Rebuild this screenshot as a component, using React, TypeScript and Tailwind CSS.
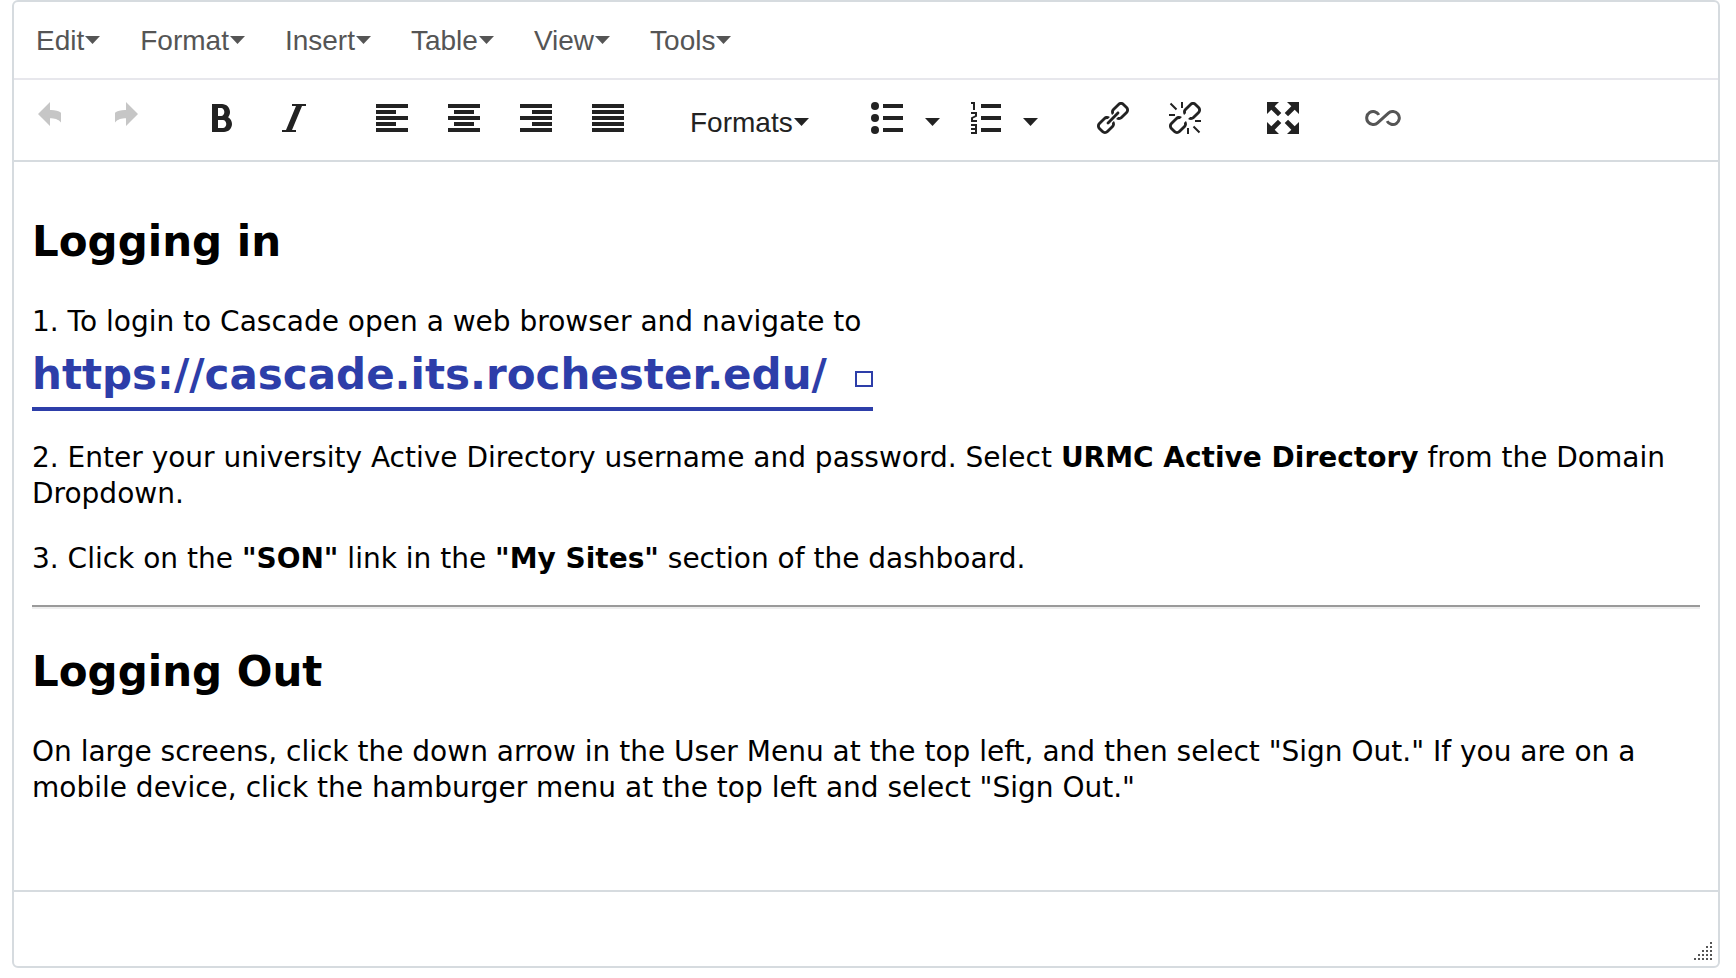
import type { ReactNode } from "react";
import {
  ImBold,
  ImItalic,
  ImListNumbered,
  ImParagraphCenter,
  ImParagraphJustify,
  ImParagraphLeft,
  ImParagraphRight,
} from "react-icons/im";

const menus = ["Edit", "Format", "Insert", "Table", "View", "Tools"];

const linkHalves =
  "M476.888 675.112c4.56 9.048 6.99 19.158 6.99 29.696 0 17.616-6.744 34.058-18.992 46.308l-163.38 163.38c-12.248 12.248-28.696 18.992-46.308 18.992s-34.06-6.744-46.308-18.992l-99.38-99.38c-12.248-12.25-18.992-28.696-18.992-46.308s6.744-34.060 18.992-46.308l163.382-163.382c12.248-12.246 28.696-18.992 46.308-18.992 10.538 0 20.644 2.43 29.696 6.988l65.338-65.336c-27.87-21.41-61.44-32.16-95.034-32.16-39.986 0-79.972 15.166-110.308 45.502l-163.38 163.382c-60.67 60.67-60.67 159.95 0 220.618l99.382 99.382c30.334 30.332 70.32 45.5 110.306 45.5 39.988 0 79.974-15.168 110.308-45.502l163.38-163.38c55.82-55.82 60.238-144.298 13.344-205.346l-65.34 65.338zM978.496 144.884l-99.38-99.382c-30.334-30.336-70.32-45.502-110.308-45.502-39.986 0-79.97 15.166-110.306 45.502l-163.382 163.382c-55.82 55.82-60.238 144.298-13.342 205.342l65.338-65.34c-4.558-9.050-6.988-19.16-6.988-29.694 0-17.616 6.744-34.060 18.992-46.308l163.382-163.382c12.246-12.248 28.694-18.994 46.306-18.994s34.060 6.746 46.308 18.994l99.38 99.382c12.248 12.248 18.992 28.694 18.992 46.308s-6.744 34.060-18.992 46.308l-163.38 163.382c-12.248 12.248-28.694 18.992-46.308 18.992-10.536 0-20.644-2.43-29.696-6.990l-65.338 65.338c27.872 21.41 61.44 32.16 95.034 32.16 39.988 0 79.974-15.168 110.308-45.504l163.38-163.380c60.672-60.666 60.672-159.944 0.002-220.612z";

function Caret() {
  return (
    <svg viewBox="0 0 15 8" className="mb-0.5 h-2 w-[15px] shrink-0" fill="currentColor" aria-hidden="true">
      <path d="M0 0h15L7.500 8z" />
    </svg>
  );
}

function UndoIcon() {
  return (
    <svg viewBox="0 0 32 32" className="size-8" fill="currentColor">
      <path d="M2 12 14 0v8c4.500-.2 8.500.8 11 2.800v9.700c-3-3.400-6.500-4.200-11-4.200V24z" />
    </svg>
  );
}

function BulletListIcon() {
  return (
    <svg viewBox="0 0 32 32" className="size-8" fill="currentColor">
      <circle cx="4" cy="4" r="4" />
      <circle cx="4" cy="16" r="4" />
      <circle cx="4" cy="28" r="4" />
      <path d="M12 2h20v4H12zM12 14h20v4H12zM12 26h20v4H12z" />
    </svg>
  );
}

function LinkIcon() {
  return (
    <svg viewBox="0 0 1024 1024" className="size-8" fill="currentColor">
      <path d="M320 704c17.600 17.600 47.274 16.726 65.942-1.942l316.118-316.116c18.668-18.668 19.540-48.342 1.940-65.942s-47.274-16.726-65.942 1.942l-316.116 316.116c-18.668 18.668-19.542 48.342-1.942 65.942z" />
      <path d={linkHalves} />
    </svg>
  );
}

function UnlinkIcon() {
  return (
    <svg viewBox="0 0 1024 1024" className="size-8" fill="currentColor">
      <path d={linkHalves} />
      <path
        d="M48 48 240 240M416 0v192M0 416h192M784 784l192 192M608 832v192M832 608h192"
        stroke="currentColor"
        strokeWidth="64"
      />
    </svg>
  );
}

function FullscreenIcon() {
  return (
    <svg viewBox="0 0 1024 1024" className="size-8" fill="currentColor">
      <path d="M1024 0v384l-138.260-138.260-212 212-107.480-107.480 212-212-138.260-138.260zM245.740 138.260l212 212-107.480 107.480-212-212-138.260 138.260v-384h384zM885.740 778.260l138.260-138.260v384h-384l138.260-138.260-212-212 107.480-107.480zM457.740 673.740l-212 212 138.260 138.260h-384v-384l138.260 138.260 212-212z" />
    </svg>
  );
}

function InfinityIcon() {
  return (
    <svg viewBox="0 0 36 16" className="h-4 w-9" fill="none" stroke="currentColor" strokeWidth="3">
      <path d="M13.900 4.900A6.500 6.500 0 1 0 12.600 12.800L23.400 3.200A6.500 6.500 0 1 1 22.100 11.100" />
    </svg>
  );
}

function ToolButton({ label, disabled, children }: { label: string; disabled?: boolean; children: ReactNode }) {
  return (
    <button
      type="button"
      title={label}
      aria-label={label}
      disabled={disabled}
      className="flex h-18 items-center px-5 disabled:text-[#c6c6c6]"
    >
      {children}
    </button>
  );
}

function SplitButton({ label, children }: { label: string; children: ReactNode }) {
  return (
    <div className="flex w-[98px]">
      <button type="button" aria-label={label} className="flex h-18 items-center pl-5">
        {children}
      </button>
      <button type="button" aria-label={`${label} options`} className="flex h-18 items-center pl-[22px] pt-2.5">
        <Caret />
      </button>
    </div>
  );
}

export default function App() {
  return (
    <div className="bg-white pl-3 pr-4 pb-2.5">
      <div className="rounded-md border-2 border-[#d6dbdf]">
        {/* Menu bar */}
        <nav className="flex h-[78px] items-center gap-10 border-b-2 border-[#e7e7ec] px-[22px] pt-0.5 font-['Liberation_Sans',Arial,sans-serif] text-[28px] leading-8 text-[#555]">
          {menus.map((menu) => (
            <button key={menu} type="button" className="flex items-center gap-px">
              {menu}
              <Caret />
            </button>
          ))}
        </nav>

        {/* Toolbar */}
        <div
          role="toolbar"
          aria-label="Formatting"
          className="flex h-[82px] items-center gap-[26px] border-b-2 border-[#d6dbdf] pb-1 pl-0.5 text-[#222]"
        >
          <div className="flex">
            <ToolButton label="Undo" disabled>
              <UndoIcon />
            </ToolButton>
            <ToolButton label="Redo" disabled>
              <span className="-scale-x-100">
                <UndoIcon />
              </span>
            </ToolButton>
          </div>
          <div className="flex">
            <ToolButton label="Bold">
              <ImBold size={32} />
            </ToolButton>
            <ToolButton label="Italic">
              <ImItalic size={32} />
            </ToolButton>
          </div>
          <div className="flex">
            <ToolButton label="Align left">
              <ImParagraphLeft size={32} />
            </ToolButton>
            <ToolButton label="Align center">
              <ImParagraphCenter size={32} />
            </ToolButton>
            <ToolButton label="Align right">
              <ImParagraphRight size={32} />
            </ToolButton>
            <ToolButton label="Justify">
              <ImParagraphJustify size={32} />
            </ToolButton>
          </div>
          <button
            type="button"
            className="flex h-18 w-[155px] items-center gap-px pl-5 pt-2.5 font-['Liberation_Sans',Arial,sans-serif] text-[28px] leading-8"
          >
            Formats
            <Caret />
          </button>
          <div className="flex pr-1">
            <SplitButton label="Bullet list">
              <BulletListIcon />
            </SplitButton>
            <SplitButton label="Numbered list">
              <ImListNumbered size={32} />
            </SplitButton>
          </div>
          <div className="flex">
            <ToolButton label="Insert link">
              <LinkIcon />
            </ToolButton>
            <ToolButton label="Remove link">
              <UnlinkIcon />
            </ToolButton>
          </div>
          <ToolButton label="Fullscreen">
            <FullscreenIcon />
          </ToolButton>
          <div className="flex text-[#555]">
            <ToolButton label="Insert block">
              <InfinityIcon />
            </ToolButton>
          </div>
        </div>

        {/* Document */}
        <main className="min-h-[728px] px-[18px] pt-[53px] pb-20 font-[Verdana,'DejaVu_Sans',sans-serif] text-[28px] leading-9 text-black">
          <h2 className="mb-[35px] text-[42px] leading-[54px] font-bold">Logging in</h2>
          <p className="mb-[29px]">
            1. To login to Cascade open a web browser and navigate to
            <br />
            <a
              href="https://cascade.its.rochester.edu/"
              className="inline-flex items-center gap-7 border-b-4 border-[#2d3ea9] pt-2 pb-[5px] align-top text-[42px] leading-[54px] font-bold text-[#2d3ea9]"
            >
              https://cascade.its.rochester.edu/
              <span className="mt-2 h-4 w-[18px] border-2 border-[#2d3ea9]" />
            </a>
          </p>
          <p className="mb-[29px]">
            2. Enter your university Active Directory username and password. Select{" "}
            <strong>URMC Active Directory</strong> from the Domain Dropdown.
          </p>
          <p className="mb-7">
            3. Click on the <strong>"SON"</strong> link in the <strong>"My Sites"</strong> section of the dashboard.
          </p>
          <hr className="mb-9 border-t-2 border-b-2 border-t-[#9a9a9a] border-b-[#eee]" />
          <h2 className="mb-[35px] text-[42px] leading-[54px] font-bold">Logging Out</h2>
          <p>
            On large screens, click the down arrow in the User Menu at the top left, and then select "Sign Out." If you
            are on a mobile device, click the hamburger menu at the top left and select "Sign Out."
          </p>
        </main>

        {/* Status bar */}
        <footer className="flex h-[76px] items-end justify-end border-t-2 border-[#d6dbdf] pr-1.5 pb-1.5">
          <svg viewBox="0 0 18 18" className="size-[18px] cursor-nwse-resize" fill="#555" aria-hidden="true">
            <path d="M16 0h2v2h-2zM12 4h2v2h-2zM16 4h2v2h-2zM8 8h2v2H8zM12 8h2v2h-2zM16 8h2v2h-2zM4 12h2v2H4zM8 12h2v2H8zM12 12h2v2h-2zM16 12h2v2h-2zM0 16h2v2H0zM4 16h2v2H4zM8 16h2v2H8zM12 16h2v2h-2zM16 16h2v2h-2z" />
          </svg>
        </footer>
      </div>
    </div>
  );
}
